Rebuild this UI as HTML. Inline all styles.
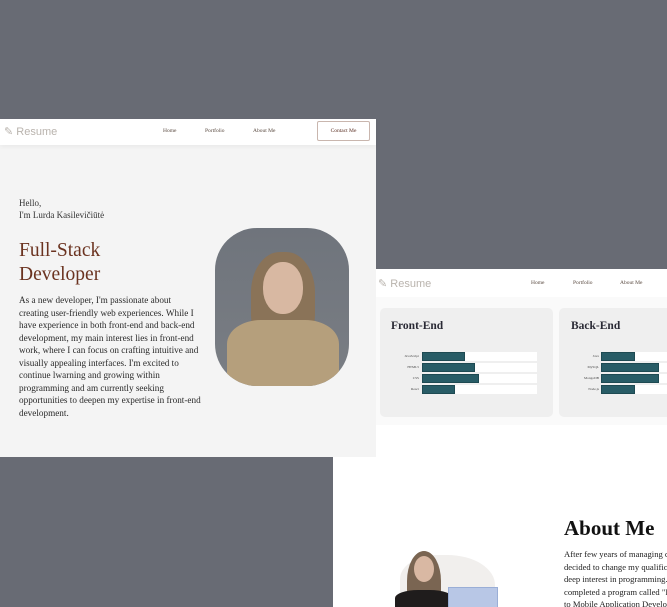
<!DOCTYPE html>
<html><head><meta charset="utf-8"><style>
*{margin:0;padding:0;box-sizing:border-box}
html,body{width:667px;height:607px;overflow:hidden}
body{background:#686b74;position:relative;font-family:"Liberation Serif",serif}
.abs{position:absolute}
.nav{background:#fff}
.logo{font-family:"Liberation Sans",sans-serif;color:#b9b3ad;font-size:11px}
.nl{font-size:5.5px;color:#5a4a40}
.p{font-size:9.2px;line-height:12.5px;color:#2a2a2a;white-space:nowrap}
.bar{position:absolute;height:9px;background:#fff}
.bar i{display:block;height:100%;background:#285c66;border:1px solid #1e4a52}
.lbl{position:absolute;font-size:3.5px;color:#444;text-align:right;width:40px}
</style></head><body>

<!-- card 2 -->
<div class="abs" style="left:333px;top:269px;width:334px;height:338px;background:#fff;overflow:hidden">
<div class="abs nav" style="left:0;top:0;width:334px;height:28px;box-shadow:0 1px 3px rgba(0,0,0,.05)"></div>
<div class="abs" style="left:0;top:28px;width:334px;height:128px;background:#fafafa"></div>
<!-- about photo -->
<div class="abs" style="left:67px;top:286px;width:95px;height:60px;background:#f1efed;border-radius:40% 50% 0 0"></div>
<div class="abs" style="left:74px;top:282px;width:34px;height:60px;background:#7a6552;border-radius:50% 50% 10% 10%"></div>
<div class="abs" style="left:81px;top:287px;width:20px;height:26px;background:#d9b8a3;border-radius:50%"></div>
<div class="abs" style="left:62px;top:321px;width:58px;height:20px;background:#1f1c1c;border-radius:40% 40% 0 0"></div>
<div class="abs" style="left:115px;top:318px;width:50px;height:22px;background:#b8c7e6;border:1px solid #9aaed6"></div>
</div>
<div class="abs logo" style="left:378px;top:277px;">✎ Resume</div>
<div class="abs nl" style="left:531px;top:280px">Home</div>
<div class="abs nl" style="left:573px;top:280px">Portfolio</div>
<div class="abs nl" style="left:620px;top:280px">About Me</div>
<div class="abs" style="left:380px;top:308px;width:173px;height:109px;background:#efefef;border-radius:5px"></div>
<div class="abs" style="left:559px;top:308px;width:120px;height:109px;background:#efefef;border-radius:5px"></div>
<div class="abs" style="left:391px;top:320px;font-size:11.5px;font-weight:bold;color:#2a2a35">Front-End</div>
<div class="abs" style="left:571px;top:320px;font-size:11.5px;font-weight:bold;color:#2a2a35">Back-End</div>
<div class="lbl" style="left:379px;top:354px">JavaScript</div>
<div class="lbl" style="left:379px;top:365px">HTML5</div>
<div class="lbl" style="left:379px;top:376px">CSS</div>
<div class="lbl" style="left:379px;top:387px">React</div>
<div class="bar" style="left:422px;top:352px;width:115px"><i style="width:43px"></i></div>
<div class="bar" style="left:422px;top:363px;width:115px"><i style="width:53px"></i></div>
<div class="bar" style="left:422px;top:374px;width:115px"><i style="width:57px"></i></div>
<div class="bar" style="left:422px;top:385px;width:115px"><i style="width:33px"></i></div>
<div class="lbl" style="left:559px;top:354px">Java</div>
<div class="lbl" style="left:559px;top:365px">MySQL</div>
<div class="lbl" style="left:559px;top:376px">MongoDB</div>
<div class="lbl" style="left:559px;top:387px">Node.js</div>
<div class="bar" style="left:601px;top:352px;width:70px"><i style="width:34px"></i></div>
<div class="bar" style="left:601px;top:363px;width:70px"><i style="width:58px"></i></div>
<div class="bar" style="left:601px;top:374px;width:70px"><i style="width:58px"></i></div>
<div class="bar" style="left:601px;top:385px;width:70px"><i style="width:34px"></i></div>
<div class="abs" style="left:564px;top:516px;font-size:21px;font-weight:bold;color:#111">About Me</div>
<div class="abs" style="left:564px;top:548px;font-size:8.6px;line-height:12.5px;color:#222;white-space:nowrap">After few years of managing c<br>decided to change my qualifica<br>deep interest in programming.<br>completed a program called "F<br>to Mobile Application Develop</div>

<!-- card 1 -->
<div class="abs" style="left:0;top:119px;width:376px;height:338px;background:#f4f4f4"></div>
<div class="abs nav" style="left:0;top:119px;width:376px;height:26px;box-shadow:0 2px 4px rgba(0,0,0,.04)"></div>
<div class="abs logo" style="left:4px;top:125px">✎ Resume</div>
<div class="abs nl" style="left:163px;top:128px">Home</div>
<div class="abs nl" style="left:205px;top:128px">Portfolio</div>
<div class="abs nl" style="left:253px;top:128px">About Me</div>
<div class="abs" style="left:317px;top:121px;width:53px;height:20px;border:1px solid #c9b6ae;border-radius:2px;font-size:5.5px;color:#5a2e22;text-align:center;line-height:18px">Contact Me</div>
<div class="abs" style="left:19px;top:198px;font-size:9px;line-height:11.5px;color:#333">Hello,<br>I'm Lurda Kasilevičiūtė</div>
<div class="abs" style="left:19px;top:239px;font-size:19.5px;line-height:24px;color:#6b3320">Full-Stack<br>Developer</div>
<div class="abs p" style="left:19px;top:294px">As a new developer, I'm passionate about<br>creating user-friendly web experiences. While I<br>have experience in both front-end and back-end<br>development, my main interest lies in front-end<br>work, where I can focus on crafting intuitive and<br>visually appealing interfaces. I'm excited to<br>continue lwarning and growing within<br>programming and am currently seeking<br>opportunities to deepen my expertise in front-end<br>development.</div>
<div class="abs" style="left:215px;top:228px;width:134px;height:158px;border-radius:42px;overflow:hidden;background:linear-gradient(#6f747c,#7a7e84)">
 <div class="abs" style="left:36px;top:24px;width:64px;height:90px;background:#8a7358;border-radius:45% 45% 30% 30%"></div>
 <div class="abs" style="left:48px;top:34px;width:40px;height:52px;background:#d8b8a2;border-radius:48%"></div>
 <div class="abs" style="left:12px;top:92px;width:112px;height:80px;background:#b59f7c;border-radius:30% 30% 0 0"></div>
</div>
</body></html>
